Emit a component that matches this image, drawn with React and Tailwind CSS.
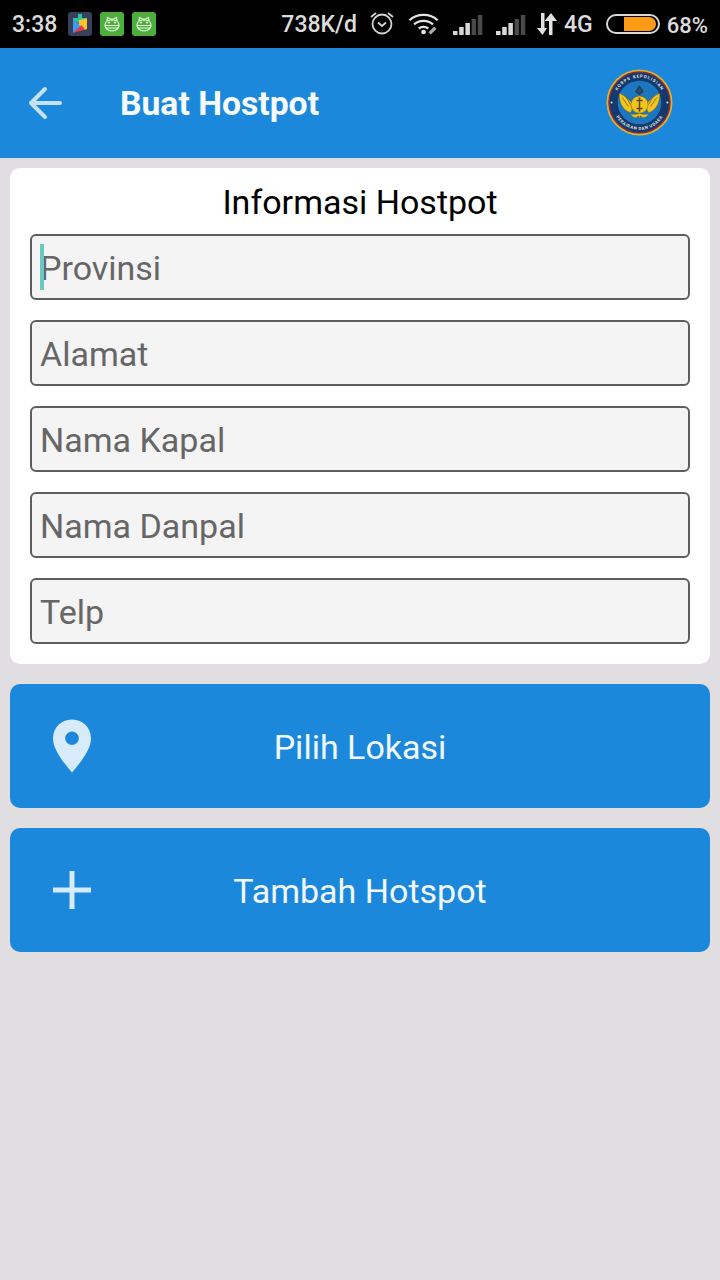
import React from "react";

const F = { fontFamily: "Roboto, sans-serif" };

function GooglePlay() {
  return (
    <svg width="24" height="24" viewBox="0 0 24 24">
      <rect width="24" height="24" rx="3" fill="#37415a" />
      <path d="M10 2h4v4h5v3l-7 3-7-4V6h5z" fill="#2fc4a0" />
      <path d="M5 7l8 7-8 7z" fill="#3f9cf2" />
      <path d="M11 8l8-1.500V17l-3 1-5-5z" fill="#f9c62b" />
      <path d="M5 21l8.500-8 3.500 4.500z" fill="#ea3a4a" />
    </svg>
  );
}

function Cat() {
  return (
    <svg width="24" height="24" viewBox="0 0 24 24">
      <rect width="24" height="24" rx="3" fill="#4caf3c" />
      <g fill="none" stroke="#eafbe5" strokeWidth="1.200">
        <path d="M7 9l.500-3.500L10 7h4l2.500-1.500.5 3.500" />
        <path d="M5 13c0-3 3-5 7-5s7 2 7 5c0 3.500-3 6-7 6s-7-2.500-7-6z" />
        <path d="M5 13.500h14M6 16h12" />
      </g>
      <circle cx="9" cy="10.500" r="1" fill="#eafbe5" />
      <circle cx="15" cy="10.500" r="1" fill="#eafbe5" />
    </svg>
  );
}

function Alarm() {
  return (
    <svg width="26" height="26" viewBox="0 0 26 26" fill="none" stroke="#d4d4d4" strokeWidth="1.800">
      <circle cx="13" cy="14" r="9.500" />
      <path d="M9 12.500l4 3.500 4-3.500" />
      <path d="M2 7l5-4M24 7l-5-4" />
    </svg>
  );
}

function Wifi() {
  return (
    <svg width="32" height="26" viewBox="0 0 34 26" fill="none" stroke="#e4e4e4" strokeWidth="2.500">
      <path d="M1.500 9C9.500 1.500 23.500 1.500 31.500 9" />
      <path d="M6.500 13.500c5.500-5 14.500-5 20 0" />
      <path d="M11.500 18c2.500-2.500 7.500-2.500 10 0" />
      <circle cx="16.500" cy="21.500" r="2.500" fill="#e4e4e4" stroke="none" />
      <path d="M23 23l6-6" stroke="#aaa" strokeWidth="3.500" />
    </svg>
  );
}

function Signal({ lit }) {
  const bars = [4, 8, 12, 16, 20];
  return (
    <svg width="31" height="21" viewBox="0 0 31 21">
      {bars.map((h, i) => (
        <rect key={i} x={1 + i * 6.200} y={21 - h} width="4.500" height={h} fill={i < lit ? "#d8d8d8" : "#4a4a4a"} />
      ))}
    </svg>
  );
}

function Traffic() {
  return (
    <svg width="22" height="24" viewBox="0 0 22 24" fill="#e2e2e2">
      <path d="M5 1h3.500v15H11l-4.500 7L1 16h4z" />
      <path d="M13 23h3.500V9H21l-6-8-6.500 8H13z" />
    </svg>
  );
}

function Battery() {
  return (
    <div className="w-[54px] h-[20px] rounded-full border-2 border-[#d8d8d8] flex items-center justify-end pr-[2px]">
      <div className="w-[32px] h-[14px] rounded-r-full bg-[#ff9a17]" />
    </div>
  );
}

function Logo() {
  return (
    <svg width="67" height="67" viewBox="0 0 66 66">
      <circle cx="33" cy="33" r="32.500" fill="#d9b52c" />
      <circle cx="33" cy="33" r="30.800" fill="#8c2a3c" />
      <circle cx="33" cy="33" r="29.300" fill="#123a70" />
      <circle cx="33" cy="33" r="21.500" fill="#1d76c0" />
      <defs>
        <path id="topArc" d="M8.500 33a24.500 24.500 0 0 1 49 0" />
        <path id="botArc" d="M6 33a27 27 0 0 0 54 0" />
      </defs>
      <text fontSize="4.200" fontWeight="700" fill="#e6e6d0" letterSpacing=".9" textAnchor="middle" style={F}>
        <textPath href="#topArc" startOffset="50%">KORPS KEPOLISIAN</textPath>
      </text>
      <text fontSize="4.200" fontWeight="700" fill="#e6e6d0" letterSpacing=".6" textAnchor="middle" style={F}>
        <textPath href="#botArc" startOffset="50%">PERAIRAN DAN UDARA</textPath>
      </text>
      <circle cx="5.500" cy="33" r="1" fill="#e6e6d0" />
      <circle cx="60.500" cy="33" r="1" fill="#e6e6d0" />
      <g fill="#f1c51c" stroke="#6d5a18" strokeWidth=".5">
        <path d="M13 24c3 1 6 3 9 6 3 2 4 4 4 7 0 3-1 5-2 6-4-1-7-4-9-8-1.500-3-2-7-2-11z" />
        <path d="M53 24c-3 1-6 3-9 6-3 2-4 4-4 7 0 3 1 5 2 6 4-1 7-4 9-8 1.500-3 2-7 2-11z" />
        <circle cx="33" cy="35" r="8.500" />
        <path d="M24 44c2 4 6 5 8 2l1 3 1-3c2 3 6 2 8-2-3 1-6 1-9-.5-3 1.500-6 1.500-9 .5z" />
      </g>
      <path d="M16 28l6 9M19 26l5 9M50 28l-6 9M47 26l-5 9" stroke="#6d5a18" strokeWidth=".7" />
      <path d="M33 28v14M30 31h6M30 39h6" stroke="#5e4710" strokeWidth="1.500" />
      <path d="M33 17l3.500 5-3.500 3-3.500-3z" fill="#244f7d" stroke="#2e3033" strokeWidth="1" />
    </svg>
  );
}

function Field({ label, caret }) {
  return (
    <div className="relative">
      <input
        readOnly
        placeholder={label}
        className="block w-full h-[66px] rounded-[6px] border-2 border-[#5e5e5e] bg-[#f4f4f4] pl-[8px] pr-2 pt-[2px] text-[34px] text-[#666666] placeholder:text-[#666666] outline-none"
        style={F}
      />
      {caret && <div className="absolute left-[10px] top-[10px] w-[4px] h-[46px] bg-[#6cc9c0]" />}
    </div>
  );
}

function ActionButton({ icon, label }) {
  return (
    <div className="relative h-[124px] rounded-[10px] bg-[#1c88dc] flex items-center justify-center">
      <div className="absolute left-[42px] top-1/2 -translate-y-1/2 flex">{icon}</div>
      <span className="text-[34px] leading-none pt-[2px] text-[#f2f8fd]" style={F}>{label}</span>
    </div>
  );
}

export default function App() {
  return (
    <div className="w-[720px] h-[1280px] bg-[#e0dee0] flex flex-col overflow-hidden" style={F}>
      <div className="h-12 bg-black flex items-center pl-3 pr-3 shrink-0">
        <span className="text-[23px] font-medium text-[#dcdcdc] mr-[11px] pt-[2px]">3:38</span>
        <div className="flex gap-2">
          <GooglePlay />
          <Cat />
          <Cat />
        </div>
        <span className="ml-auto text-[23px] font-medium text-[#dcdcdc] pt-[2px]">738K/d</span>
        <div className="ml-[12px] flex -mt-[2px]"><Alarm /></div>
        <div className="ml-[13px] flex"><Wifi /></div>
        <div className="ml-[12px] flex"><Signal lit={3} /></div>
        <div className="ml-[12px] flex"><Signal lit={3} /></div>
        <div className="ml-[10px] flex"><Traffic /></div>
        <span className="ml-[6px] text-[23px] font-medium text-[#dcdcdc] pt-[2px]">4G</span>
        <div className="ml-[13px] flex"><Battery /></div>
        <span className="ml-[7px] text-[22px] font-medium text-[#dcdcdc] pt-[2px]">68%</span>
      </div>

      <div className="h-[110px] bg-[#1c88dc] flex items-center pl-[28px] pr-[47px] shrink-0">
        <svg width="34" height="34" viewBox="0 0 34 34" fill="none" stroke="#c4e1f7" strokeWidth="4" strokeLinecap="round" strokeLinejoin="round">
          <path d="M32 17H3M17 3L3 17l14 14" />
        </svg>
        <span className="ml-[58px] text-[33.700px] font-bold text-[#f7fbfe] pt-[3px]">Buat Hostpot</span>
        <div className="ml-auto flex -mt-[1px]"><Logo /></div>
      </div>

      <div className="flex flex-col gap-5 p-[10px]">
        <div className="bg-white rounded-[10px] px-5 pb-5">
          <div className="h-[66px] flex items-center justify-center text-[34px] text-black pt-[3px]">Informasi Hostpot</div>
          <div className="flex flex-col gap-5">
            <Field label="Provinsi" caret />
            <Field label="Alamat" />
            <Field label="Nama Kapal" />
            <Field label="Nama Danpal" />
            <Field label="Telp" />
          </div>
        </div>
        <ActionButton
          label="Pilih Lokasi"
          icon={
            <svg width="40" height="54" viewBox="0 0 40 54">
              <path fillRule="evenodd" fill="#d8ebfa" d="M20 .500C9 .500 1 9 1 19.500 1 31 12 44 20 53.500 28 44 39 31 39 19.500 39 9 31 .500 20 .500zM20 12.500a6.800 6.800 0 1 1 0 13.600 6.800 6.800 0 0 1 0-13.600z" />
            </svg>
          }
        />
        <ActionButton
          label="Tambah Hotspot"
          icon={
            <svg width="40" height="40" viewBox="0 0 40 40" fill="#d8ebfa">
              <rect x="17.500" y="1" width="5" height="38" />
              <rect x="1" y="17.500" width="38" height="5" />
            </svg>
          }
        />
      </div>
    </div>
  );
}
